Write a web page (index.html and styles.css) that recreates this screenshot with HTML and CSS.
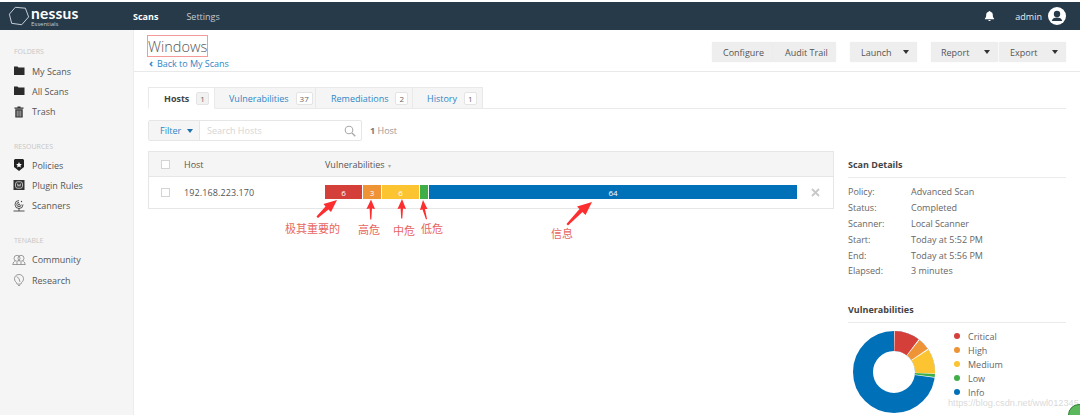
FILE: index.html
```html
<!DOCTYPE html>
<html lang="en">
<head>
<meta charset="utf-8">
<title>Nessus Essentials - Windows</title>
<link rel="stylesheet" href="styles.css">
</head>
<body>
<header class="topbar">
  <div class="logo">
    <svg class="logo-mark" viewBox="0 0 24 24" width="22" height="22"><path d="M8 2.500 19 3.500 22.500 13 15 21.500 4 20 1.500 10Z" fill="none" stroke="#d5dbe0" stroke-width="1"/></svg>
    <div class="logo-text"><span class="logo-name">nessus</span><span class="logo-sub">Essentials</span></div>
  </div>
  <nav class="topnav"><a class="topnav-on">Scans</a><a>Settings</a></nav>
  <div class="topright">
    <svg viewBox="0 0 12 12" width="11" height="12"><path d="M6 .5c.6 0 1 .4 1 .9 1.700.4 2.600 1.700 2.600 3.400 0 2.200.6 3 1.400 3.900v.8H1v-.8c.8-.9 1.400-1.700 1.400-3.900C2.400 3.100 3.300 1.800 5 1.400c0-.5.400-.9 1-.9ZM4.700 10.300h2.600C7.200 11 6.700 11.500 6 11.500s-1.200-.5-1.300-1.200Z" fill="#fff"/></svg>
    <span class="admin">admin</span>
    <svg viewBox="0 0 18 18" width="18" height="18"><circle cx="9" cy="9" r="9" fill="#fff"/><circle cx="9" cy="7" r="3.200" fill="#263a4a"/><path d="M3.800 14c.4-2.600 2.400-3.600 5.200-3.600s4.800 1 5.200 3.600Z" fill="#263a4a"/></svg>
  </div>
</header>

<div class="shell">
  <aside class="sidebar">
    <h4 class="side-head">FOLDERS</h4>
    <a class="side-item"><svg class="side-ic" viewBox="0 0 12 12"><path d="M1 1.500h3.500l1 1H11.500V10H1Z" fill="#2b2b2b"/></svg>My Scans</a>
    <a class="side-item"><svg class="side-ic" viewBox="0 0 12 12"><path d="M1 1.500h3.500l1 1H11.500V10H1Z" fill="#2b2b2b"/></svg>All Scans</a>
    <a class="side-item"><svg class="side-ic" viewBox="0 0 12 12"><path d="M4.500 .5h3v1H10.500v1.200H1.500V1.500h3ZM2.300 3.300h7.400V11.500H2.300Z" fill="#333"/><path d="M4.200 4.500v6M6 4.500v6M7.800 4.500v6" stroke="#e8e8e8" stroke-width=".7"/></svg>Trash</a>
    <h4 class="side-head side-gap side-head-tight">RESOURCES</h4>
    <a class="side-item"><svg class="side-ic" viewBox="0 0 12 12"><path d="M2 0h8l1 1v7L6 12 1 8V1Z" fill="#222"/><path d="M6 3l.9 1.900 2 .2-1.500 1.300.5 2L6 7.400 4.100 8.400l.5-2L3.100 5.100l2-.2Z" fill="#fff"/></svg>Policies</a>
    <a class="side-item"><svg class="side-ic" viewBox="0 0 12 12"><rect x=".5" y="1" width="11" height="10" fill="#333"/><rect x="2.500" y="2.800" width="7" height="6.400" rx="2" fill="none" stroke="#ddd" stroke-width=".8"/><path d="M4.200 4.400l.8 3 1-2 1 2 .8-3" fill="none" stroke="#ddd" stroke-width=".7"/></svg>Plugin Rules</a>
    <a class="side-item"><svg class="side-ic" viewBox="0 0 12 12"><path d="M6 .5a4 4 0 1 0 4 4M6 2.300A2.200 2.200 0 1 0 8.200 4.500M6 8v3M.5 11h11" fill="none" stroke="#444" stroke-width=".9"/><circle cx="8.500" cy="1.500" r=".7" fill="#444"/><circle cx="6" cy="4.500" r=".9" fill="#444"/></svg>Scanners</a>
    <h4 class="side-head side-gap">TENABLE</h4>
    <a class="side-item"><svg class="side-ic side-ic-w" viewBox="0 0 14 12"><circle cx="5" cy="4.300" r="3" fill="none" stroke="#777" stroke-width=".7"/><circle cx="9" cy="4.300" r="3" fill="none" stroke="#777" stroke-width=".7"/><path d="M1 10.500c0-2.200 1-3 2.300-3.600M13 10.500c0-2.200-1-3-2.300-3.600M.5 10.500h13M5 8v2.500M9 8v2.500" fill="none" stroke="#777" stroke-width=".7"/></svg>Community</a>
    <a class="side-item"><svg class="side-ic" viewBox="0 0 12 12"><path d="M6 .5C3.200.5 1.500 2.400 1.500 4.800c0 1.800 1 3 2 3.900l.5 1.400h4l.5-1.400c1-.9 2-2.100 2-3.900C10.500 2.400 8.800.5 6 .5ZM3.500 2.500 6 4.500l1 3.500M5 11.500h2" fill="none" stroke="#777" stroke-width=".7"/></svg>Research</a>
  </aside>

  <main class="main">
    <div class="pagehead">
      <div class="pagehead-left">
        <h1 class="title">Windows</h1>
        <a class="back"><span class="back-chev">‹</span>Back to My Scans</a>
      </div>
      <div class="actions">
        <div class="btngroup"><button class="btn btn-cfg">Configure</button><button class="btn btn-audit">Audit Trail</button></div>
        <button class="btn btn-launch">Launch<i class="caret"></i></button>
        <div class="btngroup btngroup-2"><button class="btn btn-report">Report<i class="caret"></i></button><button class="btn btn-export">Export<i class="caret"></i></button></div>
      </div>
    </div>

    <div class="body">
      <div class="tabs">
        <a class="tab tab-on">Hosts<span class="count count-on">1</span></a>
        <a class="tab tab-2">Vulnerabilities<span class="count">37</span></a>
        <a class="tab tab-3">Remediations<span class="count">2</span></a>
        <a class="tab tab-4">History<span class="count">1</span></a>
      </div>

      <div class="filterrow">
        <div class="filterbox">
          <span class="filter-btn">Filter<i class="caret caret-blue"></i></span>
          <span class="search">Search Hosts
            <svg viewBox="0 0 12 12" width="12" height="12"><circle cx="5" cy="5" r="3.800" fill="none" stroke="#aaa" stroke-width="1.100"/><path d="M8 8l3.300 3.300" stroke="#aaa" stroke-width="1.400"/></svg>
          </span>
        </div>
        <span class="hostcount"><b>1</b> Host</span>
      </div>

      <div class="columns">
        <div class="table">
          <div class="thead">
            <span class="check"></span>
            <span class="col-host">Host</span>
            <span class="col-vuln">Vulnerabilities <small class="sort">▾</small></span>
          </div>
          <div class="trow">
            <span class="check"></span>
            <span class="col-host col-ip">192.168.223.170</span>
            <div class="bar">
              <span class="seg seg-crit">6</span>
              <span class="seg seg-high">3</span>
              <span class="seg seg-med">6</span>
              <span class="seg seg-low"></span>
              <span class="seg seg-info">64</span>
            </div>
            <svg class="remove" viewBox="0 0 9 9" width="9" height="9"><path d="M1 1l7 7M8 1 1 8" stroke="#c8c8c8" stroke-width="1.800"/></svg>
          </div>
        </div>

        <aside class="details">
          <h3 class="details-head">Scan Details</h3>
          <dl class="dl">
            <dt>Policy:</dt><dd>Advanced Scan</dd>
            <dt>Status:</dt><dd>Completed</dd>
            <dt>Scanner:</dt><dd>Local Scanner</dd>
            <dt>Start:</dt><dd>Today at 5:52 PM</dd>
            <dt>End:</dt><dd>Today at 5:56 PM</dd>
            <dt>Elapsed:</dt><dd>3 minutes</dd>
          </dl>
          <h3 class="details-head details-head-2">Vulnerabilities</h3>
          <div class="chartrow">
            <svg class="donut" viewBox="0 0 84 84" width="84" height="84">
              <g fill="none" stroke-width="20" transform="rotate(-90 42 42)">
                <circle cx="42" cy="42" r="31" pathLength="360" stroke="#0071b9" stroke-dasharray="360 0"/>
                <circle cx="42" cy="42" r="31" pathLength="360" stroke="#fff" stroke-dasharray="98 262"/>
                <circle cx="42" cy="42" r="31" pathLength="360" stroke="#d43f3a" stroke-dasharray="36 324" stroke-dashoffset="-1"/>
                <circle cx="42" cy="42" r="31" pathLength="360" stroke="#ee9336" stroke-dasharray="17 343" stroke-dashoffset="-38.500"/>
                <circle cx="42" cy="42" r="31" pathLength="360" stroke="#fdc431" stroke-dasharray="35 325" stroke-dashoffset="-57"/>
                <circle cx="42" cy="42" r="31" pathLength="360" stroke="#3fae49" stroke-dasharray="4 356" stroke-dashoffset="-93"/>
              </g>
            </svg>
            <ul class="legend">
              <li><i class="dot dot-crit"></i>Critical</li>
              <li><i class="dot dot-high"></i>High</li>
              <li><i class="dot dot-med"></i>Medium</li>
              <li><i class="dot dot-low"></i>Low</li>
              <li><i class="dot dot-info"></i>Info</li>
            </ul>
          </div>
        </aside>
      </div>
    </div>
  </main>
</div>

<svg class="arrows" viewBox="0 0 1080 415" width="1080" height="415">
  <g fill="#fb2f2f">
    <path d="M337 200 331 212 328.500 209.500 318 218 316.500 216.500 325.500 206.500 323.500 204Z"/>
    <path d="M371 199.500 375 209 372 208.500 371.300 219.500 370.200 219.500 369.600 208.500 366.500 209Z"/>
    <path d="M402 199 406 209 403 208.500 402.300 218.500 401.200 218.500 400.600 208.500 397.500 209Z"/>
    <path d="M423 200 427.500 209 425 209 427 219 426 219.500 422.500 209.500 420 210Z"/>
    <path d="M592 202 585.500 215 582.500 212 568 225.500 566.500 224 579.500 209 577 206.500Z"/>
  </g>
</svg>
<span class="note note-1">极其重要的</span>
<span class="note note-2">高危</span>
<span class="note note-3">中危</span>
<span class="note note-4">低危</span>
<span class="note note-5">信息</span>
<span class="watermark">https://blog.csdn.net/wwl012345</span>
<span class="corner"></span>
</body>
</html>
```
FILE: styles.css
```css
* { box-sizing: border-box; }
html, body { margin: 0; height: 415px; overflow: hidden; }
body { position: relative; width: 1080px; background: #fff; font-family: "Open Sans", "Noto Sans", sans-serif; font-size: 9px; color: #555; padding-top: 2px; display: flex; flex-direction: column; }
a { color: inherit; text-decoration: none; }
h1, h3, h4, dl, dd, ul { margin: 0; padding: 0; }
ul { list-style: none; }

/* top bar */
.topbar { height: 28px; flex: none; background: #263a4a; display: flex; align-items: center; color: #fff; padding-left: 8px; }
.logo { display: flex; align-items: center; width: 125px; }
.logo-mark { margin-right: 1px; flex: none; }
.logo-text { display: flex; flex-direction: column; margin-top: 2px; }
.logo-name { font-family: "Lato", sans-serif; font-size: 15.500px; font-weight: 700; line-height: 13px; letter-spacing: .2px; }
.logo-sub { font-size: 6px; line-height: 8px; color: #c4ccd3; }
.topnav { display: flex; gap: 28px; font-size: 9px; color: #c3cbd2; margin-top: 1px; }
.topnav-on { color: #fff; font-weight: 700; }
.topright { margin-left: auto; display: flex; align-items: center; padding-right: 14px; }
.admin { font-size: 9px; color: #e8ecef; margin: 0 6px 0 20px; }

/* shell */
.shell { flex: 1; display: flex; min-height: 0; }
.sidebar { width: 134px; flex: none; background: #f5f5f5; border-right: 1px solid #ececec; padding: 16px 0 0 14px; }
.side-head { font-size: 7px; font-weight: 400; color: #c6c6c6; line-height: 11px; margin-bottom: 4px; }
.side-gap { margin-top: 19px; }
.side-head-tight { margin-bottom: 3px; }
.side-item { display: flex; align-items: center; height: 20.300px; font-size: 9px; color: #555; }
.side-ic { width: 12px; height: 12px; margin-right: 7px; margin-left: -1px; flex: none; }
.side-ic-w { width: 14px; margin-left: -2px; margin-right: 6px; }

/* main */
.main { flex: 1; min-width: 0; display: flex; flex-direction: column; }
.pagehead { height: 42px; flex: none; border-bottom: 1px solid #e9e9e9; display: flex; justify-content: space-between; padding: 5px 14px 0 13px; }
.pagehead-left { display: flex; flex-direction: column; }
.title { font-size: 14.500px; font-weight: 300; color: #555; line-height: 21px; width: 61px; height: 22px; border: 1px solid #f59a9a; white-space: nowrap; }
.back { font-size: 9px; color: #2f86c6; line-height: 11px; margin-top: 1px; padding-left: 2px; letter-spacing: -.03px; }
.back-chev { display: inline-block; width: 8px; font-weight: 700; font-size: 11px; line-height: 9px; }
.actions { display: flex; align-items: flex-start; padding-top: 7px; }
.btngroup { display: flex; }
.btn { height: 20px; border: 0; border-radius: 2px; background: #eeeeee; color: #555; font: 9px "Open Sans", sans-serif; padding: 0; display: flex; align-items: center; box-shadow: 0 0 1px #ddd; }
.btn-cfg { width: 61px; padding-left: 11px; }
.btn-audit { width: 63px; padding-left: 12px; }
.btn-launch { width: 67px; padding-left: 11px; margin-left: 14px; }
.btngroup-2 { margin-left: 14px; gap: 1px; }
.btn-report { width: 67px; padding-left: 10px; }
.btn-export { width: 67px; padding-left: 11px; }
.caret { width: 0; height: 0; border: 3.500px solid transparent; border-top: 4px solid #333; border-bottom: 0; margin-left: auto; margin-right: 8px; }

/* body */
.body { flex: 1; padding: 15px 14px 0 14px; min-height: 0; }
.tabs { display: flex; height: 22px; border-bottom: 1px solid #e9e9e9; }
.tab { height: 22px; display: flex; align-items: center; background: #f5f5f5; border: 1px solid #e9e9e9; border-left: 0; color: #2f86c6; font-size: 9px; }
.tab-on { width: 67px; padding-left: 15px; background: #fff; border-left: 1px solid #e9e9e9; border-bottom-color: #fff; color: #444; font-weight: 700; }
.tab-2 { width: 101px; padding-left: 14px; }
.tab-3 { width: 97px; padding-left: 15px; }
.tab-4 { width: 70px; padding-left: 14px; }
.count { display: inline-flex; justify-content: center; align-items: center; height: 13px; min-width: 12px; padding: 0 3px; margin-left: 7px; background: #fff; border: 1px solid #e4e4e4; border-radius: 2px; color: #666; font-size: 8px; font-weight: 400; }
.count-on { background: #f2f2f2; }
.filterrow { display: flex; align-items: center; margin-top: 11px; height: 21px; }
.filterbox { display: flex; width: 214px; height: 21px; border: 1px solid #e6e6e6; border-radius: 2px; }
.filter-btn { width: 51px; background: #f5f5f5; border-right: 1px solid #e6e6e6; color: #2f86c6; display: flex; align-items: center; padding-left: 11px; font-size: 9px; }
.caret-blue { border-top-color: #1d72b0; margin-right: 6px; }
.search { flex: 1; display: flex; align-items: center; justify-content: space-between; padding: 0 5px 0 7px; color: #d5d5d5; font-size: 9px; }
.hostcount { margin-left: 8px; color: #999; }
.hostcount b { color: #777; }
.columns { display: flex; margin-top: 10px; align-items: flex-start; }

/* table */
.table { width: 686px; flex: none; border: 1px solid #e6e6e6; }
.thead { height: 25px; background: #f5f5f5; border-bottom: 1px solid #e6e6e6; display: flex; align-items: center; padding-left: 12px; }
.trow { height: 31px; display: flex; align-items: center; padding-left: 12px; }
.check { width: 9px; height: 9px; border: 1px solid #d4d4d4; background: #fff; flex: none; margin-right: 14px; }
.col-host { width: 141px; flex: none; font-size: 9px; color: #555; }
.col-ip { letter-spacing: .1px; }
.col-vuln { color: #555; }
.sort { font-size: 6px; color: #aaa; margin-left: 1px; }
.bar { width: 472px; height: 14px; margin-bottom: 1px; flex: none; display: flex; gap: 1px; }
.seg { display: flex; align-items: center; justify-content: center; color: #fff; font-size: 8px; height: 14px; }
.seg-crit { width: 37px; background: #d43f3a; }
.seg-high { width: 18px; background: #ee9336; }
.seg-med { width: 37px; background: #fdc431; }
.seg-low { width: 8px; background: #3fae49; }
.seg-info { flex: 1; background: #0071b9; }
.remove { margin-left: 14px; }

/* details */
.details { width: 218px; flex: none; margin-left: 14px; }
.details-head { font-size: 9px; font-weight: 700; color: #444; line-height: 12px; padding: 8px 0 6px; border-bottom: 1px solid #ebebeb; }
.dl { display: grid; grid-template-columns: 63px 1fr; grid-auto-rows: 15.800px; padding-top: 6px; align-items: center; }
dd, dt { font-size: 9px; color: #666; }
.details-head-2 { margin-top: 17.500px; }
.chartrow { display: flex; margin-top: 7px; margin-left: 4px; }
.donut { flex: none; }
.legend { margin-left: 18px; margin-top: -1px; }
.legend li { display: flex; align-items: center; height: 14px; font-size: 9px; color: #666; }
.dot { width: 6px; height: 6px; border-radius: 50%; margin-right: 8px; }
.dot-crit { background: #d43f3a; }
.dot-high { background: #ee9336; }
.dot-med { background: #fdc431; }
.dot-low { background: #3fae49; }
.dot-info { background: #0071b9; }

/* annotations over the screenshot */
.arrows { position: absolute; left: 0; top: 0; pointer-events: none; }
.note { position: absolute; font-family: "Noto Sans CJK SC", sans-serif; font-size: 11px; line-height: 14px; color: #e8655f; white-space: nowrap; }
.note-1 { left: 285px; top: 221px; }
.note-2 { left: 358px; top: 222px; }
.note-3 { left: 393px; top: 223px; }
.note-4 { left: 421px; top: 221px; }
.note-5 { left: 551px; top: 226px; }
.watermark { position: absolute; left: 948px; top: 398px; font: 9.200px/11px "Liberation Sans", sans-serif; color: rgba(200,200,200,.7); white-space: nowrap; }
.corner { position: absolute; left: 1068px; top: 404px; width: 22px; height: 22px; border-radius: 50%; background: #5cb85c; border: 1px solid #2e7d32; }
```
